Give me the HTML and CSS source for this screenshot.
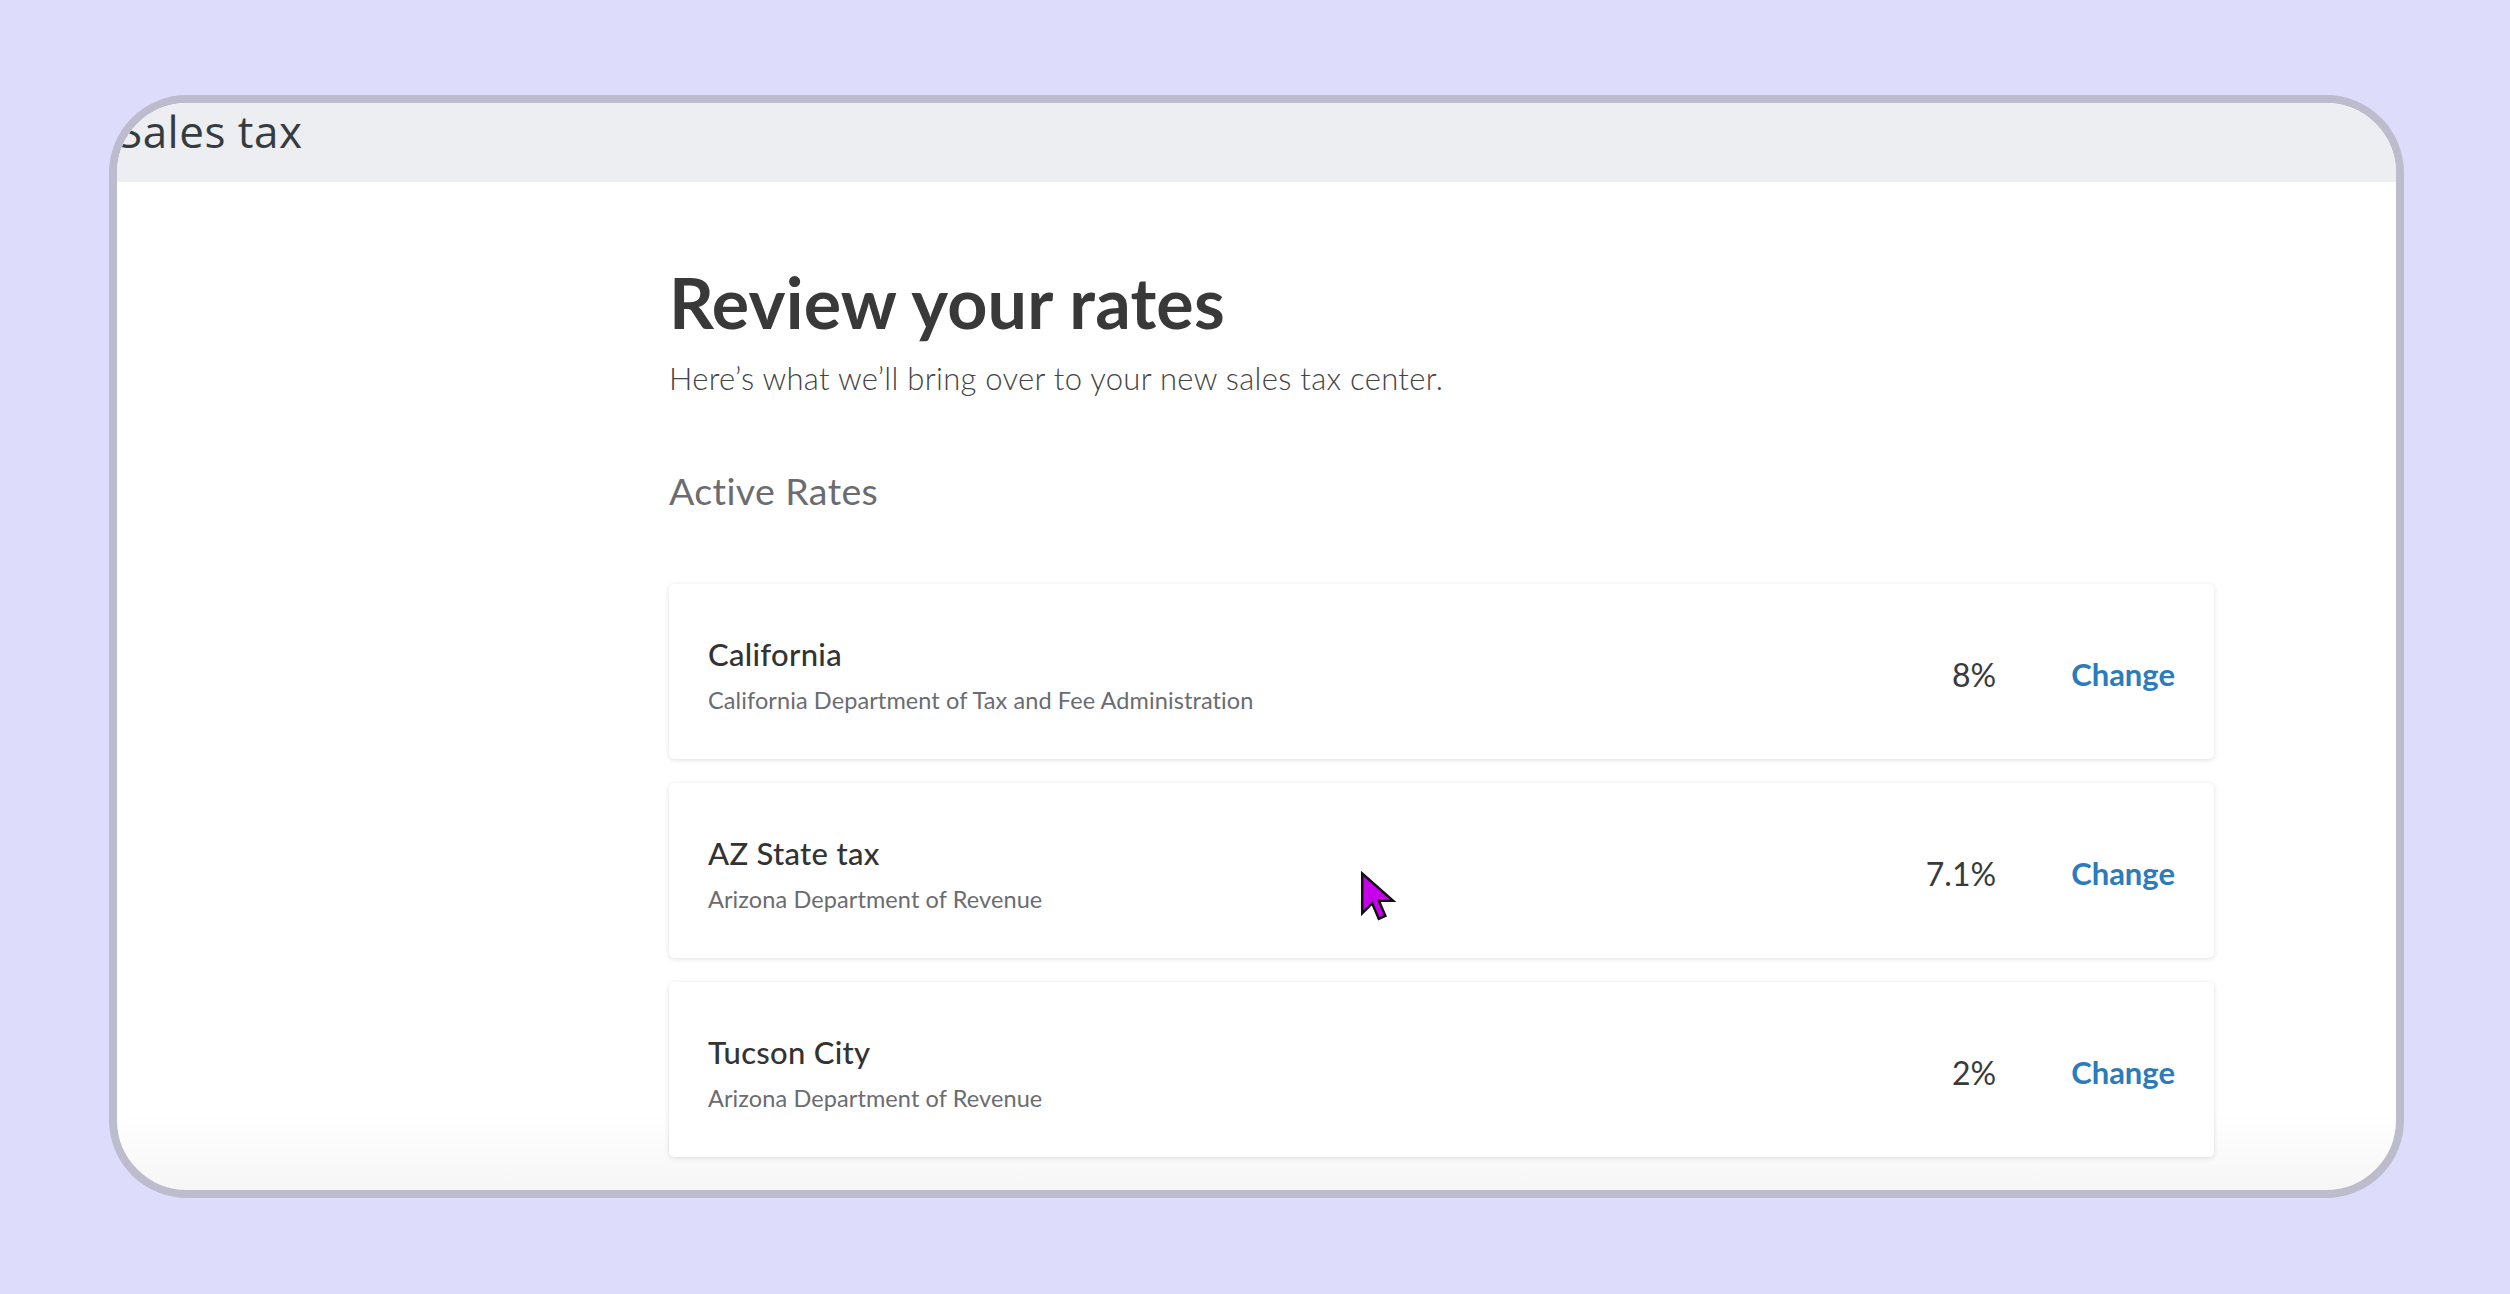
FILE: index.html
```html
<!DOCTYPE html>
<html lang="en">
<head>
    <meta charset="UTF-8">
    <meta name="viewport" content="width=device-width, initial-scale=1.0">
    <title>Sales tax</title>
    <link rel="stylesheet" href="styles.css">
</head>
<body>
    <div class="frame">
        <header class="topbar">
            <span class="page-title">Sales tax</span>
        </header>
        <main class="content">
            <h1>Review your rates</h1>
            <p class="lead">Here’s what we’ll bring over to your new sales tax center.</p>
            <h2>Active Rates</h2>
            <div class="rate-list">
                <div class="rate-card">
                    <div class="rate-info">
                        <div class="rate-name">California</div>
                        <div class="rate-agency">California Department of Tax and Fee Administration</div>
                    </div>
                    <div class="rate-value">8%</div>
                    <a href="#" class="change-link">Change</a>
                </div>
                <div class="rate-card">
                    <div class="rate-info">
                        <div class="rate-name">AZ State tax</div>
                        <div class="rate-agency">Arizona Department of Revenue</div>
                    </div>
                    <div class="rate-value">7.1%</div>
                    <a href="#" class="change-link">Change</a>
                </div>
                <div class="rate-card">
                    <div class="rate-info">
                        <div class="rate-name">Tucson City</div>
                        <div class="rate-agency">Arizona Department of Revenue</div>
                    </div>
                    <div class="rate-value">2%</div>
                    <a href="#" class="change-link">Change</a>
                </div>
            </div>
        </main>
        <svg class="cursor" width="42" height="58" viewBox="0 0 19 26">
            <path d="M1 1 L1 19 L5.5 14.5 L8.5 21.5 L11.5 20.2 L8.6 13.4 L15 13.4 Z" fill="#c600e8" stroke="#111" stroke-width="1.1" stroke-linejoin="miter"/>
        </svg>
    </div>
</body>
</html>
```

FILE: styles.css
```css
body {
    margin: 0;
    padding: 0;
    background-color: #dddcfb;
    font-family: Lato, "Open Sans", sans-serif;
    color: #393a3d;
}
.frame {
    position: relative;
    margin: 95px 0 0 109px;
    width: 2295px;
    height: 1103px;
    box-sizing: border-box;
    border: 8px solid #bcbccc;
    border-radius: 78px;
    overflow: hidden;
    background: linear-gradient(to bottom, #ffffff 93%, #f6f6f7 100%);
}
.topbar {
    height: 79px;
    background-color: #eceef1;
    display: flex;
    align-items: flex-start;
}
.page-title {
    font-family: "Open Sans", sans-serif;
    font-size: 44px;
    line-height: 1;
    color: #363b40;
    margin-left: 1px;
    margin-top: 6px;
    letter-spacing: 0.5px;
}
.content {
    padding: 0 0 0 552px;
    width: 1545px;
}
h1 {
    font-size: 70px;
    font-weight: 700;
    color: #393939;
    margin: 0;
    padding-top: 85px;
    line-height: 1;
    letter-spacing: 0.2px;
}
.lead {
    font-size: 31px;
    font-weight: 300;
    color: #444;
    margin: 26px 0 0;
    line-height: 1;
    letter-spacing: 0.3px;
}
h2 {
    font-size: 37.5px;
    font-weight: 400;
    color: #6b6c70;
    margin: 78px 0 0;
    line-height: 1;
    letter-spacing: 0.4px;
}
.rate-list {
    display: flex;
    flex-direction: column;
    gap: 24px;
    margin-top: 74px;
}
.rate-card {
    height: 175px;
    box-sizing: border-box;
    padding: 6px 39px 0;
    display: flex;
    align-items: center;
    background: #fff;
    border-radius: 5px;
    box-shadow: 0 1px 5px rgba(0, 0, 0, 0.13);
}
.rate-info {
    flex: 1;
    display: flex;
    flex-direction: column;
    gap: 19px;
    margin-top: 4px;
}
.rate-name {
    font-size: 31px;
    font-weight: 500;
    color: #333;
    line-height: 1;
    letter-spacing: 0.3px;
}
.rate-agency {
    font-size: 23.5px;
    color: #6b6c70;
    line-height: 1;
    letter-spacing: 0.1px;
}
.rate-value {
    font-size: 32px;
    color: #393a3d;
}
.change-link {
    margin-left: 75px;
    font-size: 31px;
    font-weight: 700;
    color: #2c7bbb;
    text-decoration: none;
}
.cursor {
    position: absolute;
    left: 1243px;
    top: 768px;
}
```
